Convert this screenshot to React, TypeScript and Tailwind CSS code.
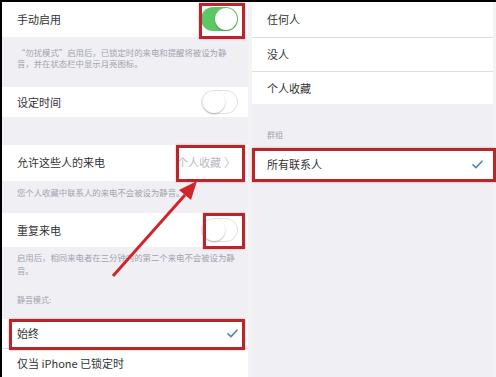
import React from 'react';

const Toggle: React.FC<{ on?: boolean }> = ({ on }) => (
  <div
    className={`w-[37px] h-[24px] rounded-full flex items-center p-[1px] ${
      on ? 'bg-[#5bc864] justify-end' : 'bg-white border border-[#e2e2e6] justify-start'
    }`}
  >
    <div className="w-[22px] h-[22px] rounded-full bg-white shadow-[0_1px_2px_rgba(0,0,0,0.25)]" />
  </div>
);

const Check: React.FC = () => (
  <svg width="11" height="9" viewBox="0 0 11 9" fill="none">
    <path d="M1 4.8 L4 7.6 L10 1.2" stroke="#5b86a8" strokeWidth="1.6" strokeLinecap="round" strokeLinejoin="round" />
  </svg>
);

const Row: React.FC<{ h: string; label: string; right?: React.ReactNode; line?: boolean }> = ({ h, label, right, line }) => (
  <div className={`${h} bg-white flex items-center pl-[15px] pr-[10px] ${line ? 'border-b border-[#dcdce0]' : ''}`}>
    <span className="flex-1 text-[11px] text-[#333]">{label}</span>
    {right}
  </div>
);

const Box: React.FC<{ className: string }> = ({ className }) => (
  <div className={`absolute border-[3px] border-[#b8262c] shadow-[0_0_2px_rgba(200,40,40,0.4)] ${className}`} />
);

const Note: React.FC<{ lines: string[]; className: string }> = ({ lines, className }) => (
  <div className={`pl-[15px] text-[8.4px] text-[#a4a4ae] whitespace-nowrap flex flex-col ${className}`}>
    {lines.map((l) => (
      <div key={l}>{l}</div>
    ))}
  </div>
);

export default function App() {
  return (
    <div className="relative w-[496px] h-[377px] overflow-hidden bg-[#f3f3f5] border-t-2 border-black flex font-['Noto_Sans_CJK_SC','Noto_Sans',sans-serif]">
      {/* left screen */}
      <div className="w-[248px] border-l-2 border-black bg-[#efeff4] flex flex-col">
        <Row h="h-[35px]" label="手动启用" right={<Toggle on />} />
        <Note
          className="h-[50px] pt-[10px] leading-[11px]"
          lines={['“勿扰模式”启用后，已锁定时的来电和提醒将被设为静', '音，并在状态栏中显示月亮图标。']}
        />
        <Row h="h-[30px]" label="设定时间" right={<Toggle />} />
        <div className="h-[28px]" />
        <Row
          h="h-[36px]"
          label="允许这些人的来电"
          right={
            <span className="text-[11px] text-[#b8b8be] flex items-center gap-[3px] pr-[2px]">
              个人收藏
              <span className="text-[12px] text-[#c8c8ce]">〉</span>
            </span>
          }
        />
        <Note className="h-[33px] pt-[6px] leading-[11px]" lines={['您个人收藏中联系人的来电不会被设为静音。']} />
        <Row h="h-[34px]" label="重复来电" right={<Toggle />} />
        <Note
          className="h-[41px] pt-[4px] leading-[13px]"
          lines={['启用后，相同来电者在三分钟内的第二个来电不会被设为静', '音。']}
        />
        <div className="h-[31px] pt-[6px] pl-[15px] text-[8px] text-[#a4a4ae]">静音模式:</div>
        <Row h="h-[30px]" label="始终" right={<Check />} line />
        <Row h="h-[28px]" label="仅当 iPhone 已锁定时" />
      </div>

      {/* right screen */}
      <div className="ml-[4px] w-[241px] bg-[#efeff4] flex flex-col">
        <Row h="h-[36px]" label="任何人" line />
        <Row h="h-[34px]" label="没人" line />
        <Row h="h-[32px]" label="个人收藏" />
        <div className="h-[44px] flex items-end pb-[7px] pl-[15px] text-[8px] text-[#a4a4ae]">群组</div>
        <Row h="h-[33px]" label="所有联系人" right={<Check />} />
      </div>

      {/* annotations */}
      <Box className="left-[199px] top-[1px] w-[46px] h-[36px]" />
      <Box className="left-[176px] top-[143px] w-[69px] h-[37px]" />
      <Box className="left-[203px] top-[211px] w-[42px] h-[36px]" />
      <Box className="left-[9px] top-[317px] w-[236px] h-[31px]" />
      <Box className="left-[252px] top-[146px] w-[244px] h-[34px]" />
      <svg className="absolute left-0 top-0 pointer-events-none" width="496" height="377">
        <line x1="113" y1="274" x2="185" y2="193" stroke="#d0262b" strokeWidth="3" />
        <polygon points="197,179 191,198 179,188" fill="#d0262b" />
      </svg>
    </div>
  );
}
